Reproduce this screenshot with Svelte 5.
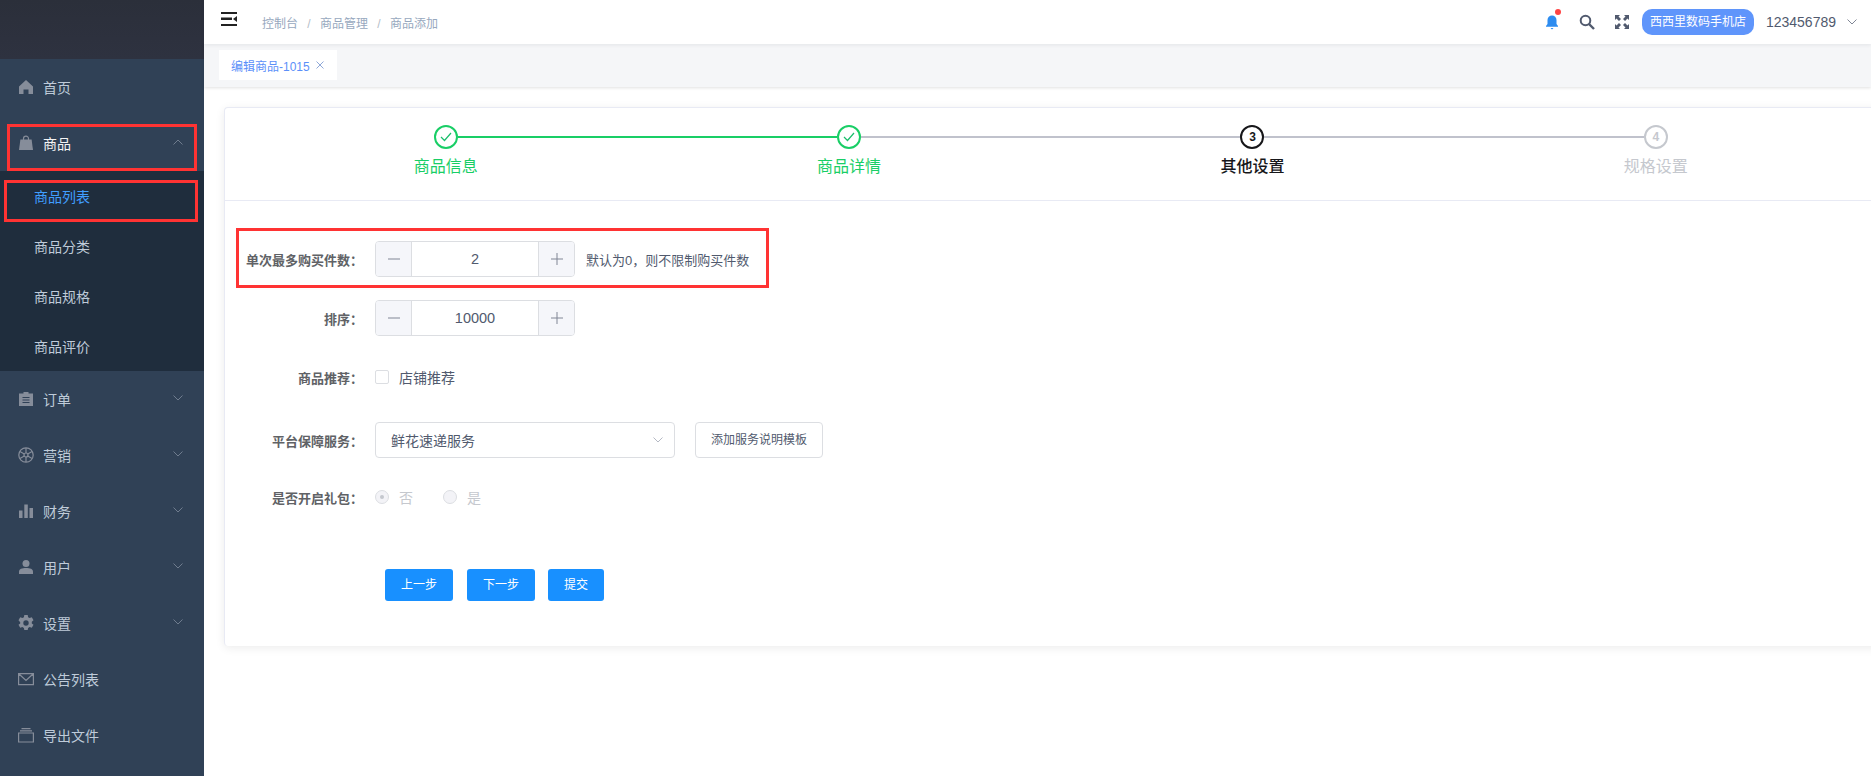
<script>
  const menus = [
    { label: "首页", icon: "home" },
    { label: "商品", icon: "bag", open: true, subs: ["商品列表", "商品分类", "商品规格", "商品评价"] },
    { label: "订单", icon: "clip", arrow: true },
    { label: "营销", icon: "wheel", arrow: true },
    { label: "财务", icon: "chart", arrow: true },
    { label: "用户", icon: "user", arrow: true },
    { label: "设置", icon: "gear", arrow: true },
    { label: "公告列表", icon: "mail" },
    { label: "导出文件", icon: "tray" }
  ];

  const steps = [
    { title: "商品信息", state: "done" },
    { title: "商品详情", state: "done" },
    { title: "其他设置", state: "now", num: 3 },
    { title: "规格设置", state: "wait", num: 4 }
  ];
</script>

<div class="layout">
  <aside class="sidebar">
    <div class="logo"></div>
    <nav>
      {#each menus as m}
        <div class="menu-item" class:open={m.open}>
          <svg class="menu-icon" viewBox="0 0 16 16" width="16" height="16">
            {#if m.icon === "home"}
              <path d="M8 1 1 7.500V15h4.500v-4.500h5V15H15V7.500z" fill="currentColor" />
            {:else if m.icon === "bag"}
              <path d="M5.500 5V3.600a2.500 2.500 0 0 1 5 0V5" fill="none" stroke="currentColor" stroke-width="1.200" />
              <path d="M2.400 4.600h11.200L15 15H1z" fill="currentColor" />
            {:else if m.icon === "clip"}
              <path d="M5.500 1h5v1.500H15V15H1V2.500h4.500z" fill="currentColor" />
              <path d="M4.500 6.500h7M4.500 9h7M4.500 11.500h7" stroke="#304156" stroke-width="1.200" />
            {:else if m.icon === "wheel"}
              <g fill="none" stroke="currentColor" stroke-width="1.200">
                <circle cx="8" cy="8" r="7.200" />
                <circle cx="8" cy="8" r="2" />
                <path d="M8 1v5M8 10v5M1.900 4.500 6.300 7M9.700 9l4.400 2.500M1.900 11.500 6.300 9M9.700 7l4.400-2.500" />
              </g>
            {:else if m.icon === "chart"}
              <path d="M1 7.500h3.500V15H1zM6.300 1.500h3.500V15H6.300zM11.500 5H15v10h-3.500z" fill="currentColor" />
            {:else if m.icon === "user"}
              <circle cx="8" cy="4.500" r="3.500" fill="currentColor" />
              <path d="M1 15v-2.500C1 10 4 9 8 9s7 1 7 3.500V15z" fill="currentColor" />
            {:else if m.icon === "gear"}
              <path fill-rule="evenodd" d="M6.300 0h3.400l.4 2.200 1.500.9 2.200-.8 1.700 3-1.700 1.400v1.700l1.700 1.400-1.700 3-2.200-.8-1.500.9-.4 2.200H6.300l-.4-2.200-1.500-.9-2.200.8-1.700-3 1.700-1.400V7.200L.5 5.300l1.700-3 2.200.8 1.500-.9zM8 5.300a2.700 2.700 0 1 0 0 5.400 2.700 2.700 0 0 0 0-5.400z" fill="currentColor" />
            {:else if m.icon === "mail"}
              <path d="M.6 2.600h14.800v11H.6zM1 3l7 6.500L15 3" fill="none" stroke="currentColor" stroke-width="1.200" />
            {:else}
              <path d="M.6 6h14.800v9H.6z" fill="none" stroke="currentColor" stroke-width="1.200" />
              <path d="M2 3.300h12v1.200H2zM3.500 1h9v1.200h-9z" fill="currentColor" />
            {/if}
          </svg>
          <span>{m.label}</span>
          {#if m.arrow || m.open}
            <svg class="menu-arrow" class:up={m.open} viewBox="0 0 10 6" width="10" height="6">
              <path d="M.5.500 5 5 9.500.500" fill="none" stroke="currentColor" />
            </svg>
          {/if}
        </div>
        {#if m.subs}
          <div class="submenu">
            {#each m.subs as s, i}
              <div class="sub-item" class:active={i === 0}>{s}</div>
            {/each}
          </div>
        {/if}
      {/each}
    </nav>
    <div class="mark mark-menu"></div>
    <div class="mark mark-sub"></div>
  </aside>

  <main class="main">
    <header class="topbar">
      <svg class="hamburger" viewBox="0 0 16 14" width="16" height="14">
        <path d="M0 0h16v2H0zM0 5.500h11v2.500H0zM0 12h16v2H0z" fill="#222" />
        <path d="M16 4v6l-4-3z" fill="#222" />
      </svg>
      <div class="crumbs">
        <span>控制台</span><i>/</i><span>商品管理</span><i>/</i><span>商品添加</span>
      </div>
      <div class="tools">
        <span class="bell">
          <svg viewBox="0 0 14 16" width="14" height="16">
            <path d="M7 1.500a4.500 4.500 0 0 0-4.500 4.500v4L1 12v.8h12V12l-1.500-2V6A4.500 4.500 0 0 0 7 1.500zM5.500 14h3L7 15.500z" fill="#2d8cf0" />
          </svg>
          <b></b>
        </span>
        <svg class="search" viewBox="0 0 16 16" width="16" height="16">
          <circle cx="6.500" cy="6.500" r="4.800" fill="none" stroke="#515a6e" stroke-width="2" />
          <path d="m10 10 5 5" stroke="#515a6e" stroke-width="2.400" />
        </svg>
        <svg class="full" viewBox="0 0 14 14" width="14" height="14">
          <g fill="#515a6e">
            <path d="M0 0h5L3.500 1.500 6 4 4 6 1.500 3.500 0 5zM14 0v5l-1.500-1.500L10 6 8 4l2.500-2.500L9 0zM0 14V9l1.500 1.500L4 8l2 2-2.500 2.500L5 14zM14 14H9l1.500-1.500L8 10l2-2 2.500 2.500L14 9z" />
          </g>
        </svg>
        <span class="shop">西西里数码手机店</span>
        <span class="account">123456789</span>
        <svg class="acc-arrow" viewBox="0 0 10 6" width="10" height="6">
          <path d="M.5.500 5 5 9.500.500" fill="none" stroke="#808695" />
        </svg>
      </div>
    </header>

    <div class="tags">
      <div class="tag">
        编辑商品-1015
        <svg viewBox="0 0 8 8" width="8" height="8">
          <path d="m.5.500 7 7M7.500.500l-7 7" stroke="#8fa8d8" />
        </svg>
      </div>
    </div>

    <section class="content">
      <div class="card">
        <div class="steps">
          {#each steps as s, i}
            <div class="step {s.state}">
              <div class="step-head">
                <span class="line" class:blank={i === 0} class:green={s.state === "done"}></span>
                <span class="dot">
                  {#if s.state === "done"}
                    <svg viewBox="0 0 12 10" width="12" height="10">
                      <path d="m1 5 3.500 3.500L11 1" fill="none" stroke="#19be6b" stroke-width="1.200" />
                    </svg>
                  {:else}
                    {s.num}
                  {/if}
                </span>
                <span class="line" class:blank={i === 3} class:green={i === 0}></span>
              </div>
              <div class="step-title">{s.title}</div>
            </div>
          {/each}
        </div>

        <form class="form">
          <div class="row">
            <span class="label">单次最多购买件数：</span>
            <div class="number">
              <span class="num-btn">
                <svg viewBox="0 0 12 12" width="12" height="12"><path d="M0 6h12" stroke="#808695" /></svg>
              </span>
              <span class="num-val">2</span>
              <span class="num-btn">
                <svg viewBox="0 0 12 12" width="12" height="12"><path d="M0 6h12M6 0v12" stroke="#808695" /></svg>
              </span>
            </div>
            <span class="hint">默认为0，则不限制购买件数</span>
          </div>

          <div class="row">
            <span class="label">排序：</span>
            <div class="number">
              <span class="num-btn">
                <svg viewBox="0 0 12 12" width="12" height="12"><path d="M0 6h12" stroke="#808695" /></svg>
              </span>
              <span class="num-val">10000</span>
              <span class="num-btn">
                <svg viewBox="0 0 12 12" width="12" height="12"><path d="M0 6h12M6 0v12" stroke="#808695" /></svg>
              </span>
            </div>
          </div>

          <div class="row">
            <span class="label">商品推荐：</span>
            <span class="check"></span>
            <span class="opt">店铺推荐</span>
          </div>

          <div class="row row-service">
            <span class="label">平台保障服务：</span>
            <div class="select">
              <span>鲜花速递服务</span>
              <svg viewBox="0 0 10 6" width="10" height="6">
                <path d="M.5.500 5 5 9.500.500" fill="none" stroke="#b5b9c4" />
              </svg>
            </div>
            <span class="outline-btn">添加服务说明模板</span>
          </div>

          <div class="row row-gift">
            <span class="label">是否开启礼包：</span>
            <span class="radio checked"></span>
            <span class="opt off">否</span>
            <span class="radio second"></span>
            <span class="opt off">是</span>
          </div>

          <div class="actions">
            <span class="btn wide">上一步</span>
            <span class="btn wide next">下一步</span>
            <span class="btn">提交</span>
          </div>
        </form>
        <div class="mark mark-row"></div>
      </div>
    </section>
  </main>
</div>

<style>
  :global(body) {
    margin: 0;
    background: #fff;
    overflow: hidden;
  }

  .layout {
    display: flex;
    width: 1871px;
    height: 776px;
    overflow: hidden;
    font-family: "Liberation Sans", "Noto Sans CJK SC", sans-serif;
    font-size: 14px;
    color: #515a6e;
  }

  .sidebar {
    position: relative;
    flex: 0 0 204px;
    background: #304156;
    color: #bfcbd9;
  }

  .logo {
    height: 59px;
    background: linear-gradient(#2b2f3a, #2e3240);
  }

  .menu-item {
    display: flex;
    align-items: center;
    height: 56px;
    padding-left: 18px;
  }

  .menu-item.open {
    color: #f4f4f5;
  }

  .menu-icon {
    flex: none;
    margin-right: 9px;
    color: #868d9a;
  }

  .menu-arrow {
    margin-left: auto;
    margin-right: 21px;
    margin-top: -3px;
    color: #6f7c8e;
  }

  .menu-arrow.up {
    transform: rotate(180deg);
  }

  .submenu {
    background: #1f2d3d;
  }

  .sub-item {
    display: flex;
    align-items: center;
    height: 50px;
    padding-left: 34px;
  }

  .sub-item.active {
    color: #409eff;
  }

  .mark {
    position: absolute;
    box-sizing: border-box;
    border: 3px solid #f33;
    pointer-events: none;
  }

  .mark-menu {
    left: 7px;
    top: 124px;
    width: 190px;
    height: 47px;
  }

  .mark-sub {
    left: 4px;
    top: 180px;
    width: 194px;
    height: 42px;
  }

  .main {
    flex: 1;
    min-width: 0;
    display: flex;
    flex-direction: column;
  }

  .topbar {
    position: relative;
    z-index: 2;
    display: flex;
    align-items: center;
    height: 44px;
    flex: none;
    padding-left: 17px;
    background: #fff;
    box-shadow: 0 1px 4px rgba(0, 21, 41, 0.08);
  }

  .hamburger {
    margin-top: -7px;
  }

  .crumbs {
    display: flex;
    align-items: baseline;
    gap: 8px;
    margin-left: 25px;
    font-size: 12px;
    color: #97a8be;
  }

  .crumbs i {
    font-style: normal;
    width: 6px;
    text-align: center;
    color: #b5bdc9;
  }

  .tools {
    display: flex;
    align-items: center;
    margin-left: auto;
    padding-right: 14px;
  }

  .bell {
    position: relative;
    display: flex;
    margin-right: 20px;
  }

  .bell b {
    position: absolute;
    right: -2px;
    top: -5px;
    width: 6px;
    height: 6px;
    border-radius: 50%;
    background: #f44;
  }

  .search {
    margin-right: 20px;
  }

  .full {
    margin-right: 13px;
  }

  .shop {
    width: 112px;
    height: 26px;
    line-height: 26px;
    border-radius: 10px;
    text-align: center;
    font-size: 12px;
    color: #fff;
    background: #5f95fb;
    margin-right: 12px;
  }

  .account {
    font-size: 14px;
    color: #515a6e;
    margin-right: 11px;
  }

  .tags {
    flex: none;
    height: 43px;
    background: #f5f6f8;
    box-shadow: 0 1px 3px rgba(0, 0, 0, 0.12);
    padding: 6px 0 0 15px;
    box-sizing: border-box;
    position: relative;
    z-index: 1;
  }

  .tag {
    display: flex;
    align-items: center;
    gap: 6px;
    width: 118px;
    height: 30px;
    background: #fff;
    box-sizing: border-box;
    padding-left: 12px;
    font-size: 12px;
    color: #5b8ff9;
    white-space: nowrap;
  }

  .content {
    flex: 1;
    padding: 20px 0 0 20px;
  }

  .card {
    position: relative;
    margin-right: -10px;
    height: 539px;
    box-sizing: border-box;
    border: 1px solid #e8eaf4;
    border-width: 1px 0 0 1px;
    border-radius: 4px;
    background: #fff;
    box-shadow: 0 2px 10px rgba(0, 0, 0, 0.08);
  }

  .steps {
    display: flex;
    height: 93px;
    padding: 17px 0 0 19px;
    box-sizing: border-box;
    border-bottom: 1px solid #e8eaf4;
  }

  .step {
    flex: 0 0 403.4px;
    display: flex;
    flex-direction: column;
    align-items: center;
  }

  .step-head {
    display: flex;
    align-items: center;
    width: 100%;
  }

  .line {
    flex: 1;
    height: 2px;
    background: #c0c2cc;
  }

  .line.green {
    background: #19ce66;
  }

  .line.blank {
    background: none;
  }

  .dot {
    flex: none;
    display: flex;
    align-items: center;
    justify-content: center;
    width: 24px;
    height: 24px;
    box-sizing: border-box;
    border-radius: 50%;
    border: 2px solid currentColor;
    font-size: 12px;
    font-weight: 700;
  }

  .step-title {
    margin-top: 6px;
    font-size: 16px;
    line-height: 24px;
  }

  .step.done {
    color: #19ce66;
  }

  .step.now {
    color: #17171a;
  }

  .step.now .step-title {
    font-weight: 500;
  }

  .step.wait {
    color: #c5c8ce;
  }

  .form {
    padding-top: 40px;
  }

  .row {
    display: flex;
    align-items: center;
    height: 36px;
    margin-bottom: 23px;
  }

  .row-service {
    margin-top: 27px;
    margin-bottom: 21px;
  }

  .row-gift {
    margin-bottom: 54px;
  }

  .label {
    flex: none;
    width: 138px;
    margin-right: 12px;
    text-align: right;
    font-size: 13px;
    font-weight: 700;
    color: #606266;
  }

  .number {
    display: flex;
    width: 200px;
    height: 36px;
    box-sizing: border-box;
    border: 1px solid #dcdee2;
    border-radius: 4px;
    overflow: hidden;
  }

  .num-btn {
    flex: none;
    width: 35px;
    display: flex;
    align-items: center;
    justify-content: center;
    background: #f5f6fa;
  }

  .num-val {
    flex: 1;
    text-align: center;
    line-height: 34px;
    font-size: 14.5px;
    border-left: 1px solid #dcdee2;
    border-right: 1px solid #dcdee2;
  }

  .hint {
    margin-left: 11px;
    font-size: 13px;
    color: #515a6e;
  }

  .check {
    width: 14px;
    height: 14px;
    box-sizing: border-box;
    border: 1px solid #dcdee2;
    border-radius: 2px;
    margin-right: 10px;
  }

  .opt {
    font-size: 14px;
  }

  .opt.off {
    color: #c5c8ce;
  }

  .select {
    display: flex;
    align-items: center;
    justify-content: space-between;
    width: 300px;
    height: 36px;
    box-sizing: border-box;
    border: 1px solid #dcdee2;
    border-radius: 4px;
    padding: 0 11px 0 15px;
  }

  .outline-btn {
    width: 128px;
    height: 36px;
    line-height: 34px;
    box-sizing: border-box;
    margin-left: 20px;
    border: 1px solid #dcdee2;
    border-radius: 4px;
    text-align: center;
    font-size: 12px;
  }

  .radio {
    position: relative;
    width: 14px;
    height: 14px;
    box-sizing: border-box;
    border: 1px solid #dcdee2;
    border-radius: 50%;
    background: #f3f3f7;
    margin-right: 10px;
  }

  .radio.second {
    margin-left: 30px;
  }

  .radio.checked::after {
    content: "";
    position: absolute;
    left: 4px;
    top: 4px;
    width: 4px;
    height: 4px;
    border-radius: 50%;
    background: #c5c8ce;
  }

  .actions {
    display: flex;
    padding-left: 160px;
  }

  .btn {
    width: 56px;
    height: 32px;
    line-height: 32px;
    border-radius: 3px;
    background: #1890ff;
    color: #fff;
    font-size: 12px;
    text-align: center;
    margin-right: 14px;
  }

  .btn.wide {
    width: 68px;
  }

  .btn.next {
    margin-right: 13px;
  }

  .mark-row {
    left: 11px;
    top: 120px;
    width: 533px;
    height: 60px;
  }
</style>
